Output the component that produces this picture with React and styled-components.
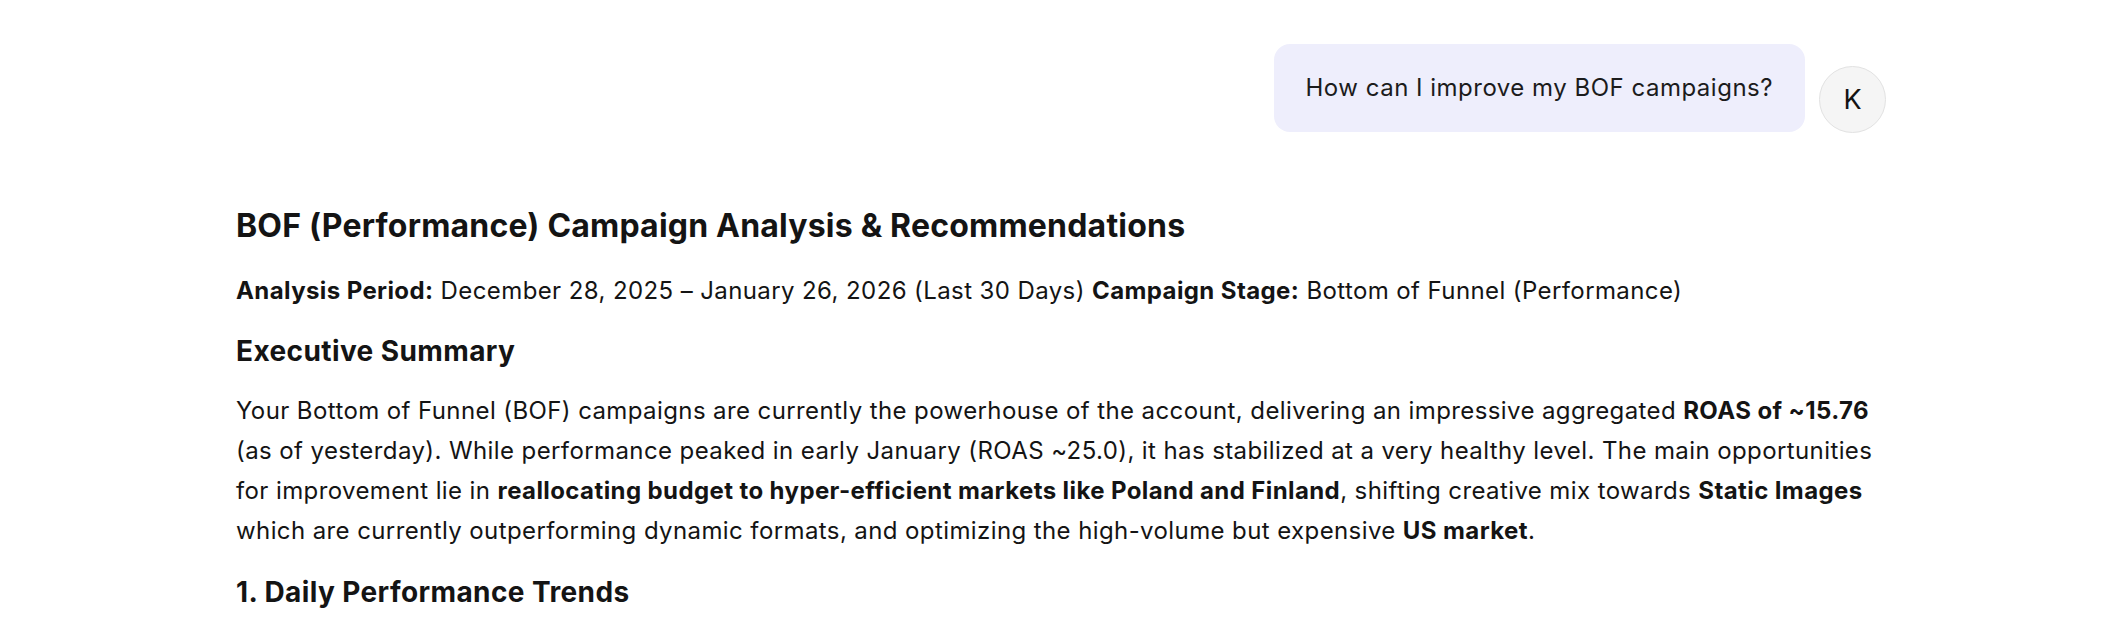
import React from "react";
import styled, { createGlobalStyle } from "styled-components";

const Global = createGlobalStyle`
  html, body { margin: 0; padding: 0; background: #ffffff; }
  body { font-family: Inter, "Liberation Sans", sans-serif; color: #141414; -webkit-font-smoothing: antialiased; }
`;

const Page = styled.main`
  box-sizing: border-box;
  width: 100%;
  padding: 44px 228px 0 236px;
  display: flex;
  flex-direction: column;
`;

const UserRow = styled.div`
  display: flex;
  justify-content: flex-end;
  align-items: flex-end;
  gap: 14px;
`;

const Bubble = styled.div`
  background: #eeeefc;
  border-radius: 16px;
  padding: 30px 32px;
  font-size: 24px;
  line-height: 28px;
  letter-spacing: 0.5px;
  color: #1c1c1c;
`;

const Avatar = styled.div`
  width: 67px;
  height: 67px;
  border-radius: 50%;
  background: #f5f5f5;
  border: 1px solid #e2e2e2;
  box-sizing: border-box;
  display: flex;
  align-items: center;
  justify-content: center;
  font-size: 27px;
  color: #141414;
  margin-bottom: -1px;
`;

const Answer = styled.article`
  margin-top: 76px;
  display: flex;
  flex-direction: column;
`;

const Title = styled.h1`
  margin: 0;
  font-size: 32px;
  line-height: 36px;
  font-weight: 700;
  letter-spacing: 0.2px;
`;

const Heading = styled.h2`
  margin: ${(p) => p.$top}px 0 0;
  font-size: 28px;
  line-height: 32px;
  font-weight: 700;
  letter-spacing: 0.4px;
`;

const Para = styled.p`
  margin: ${(p) => p.$top}px 0 0;
  font-size: 24px;
  line-height: 40px;
  letter-spacing: 0.4px;
`;

const B = styled.strong`
  font-weight: 700;
`;

export default function App() {
  return (
    <>
      <Global />
      <Page>
        <UserRow>
          <Bubble>How can I improve my BOF campaigns?</Bubble>
          <Avatar>K</Avatar>
        </UserRow>
        <Answer>
          <Title>BOF (Performance) Campaign Analysis &amp; Recommendations</Title>
          <Para $top={27}>
            <B>Analysis Period:</B> December 28, 2025 – January 26, 2026 (Last 30 Days){" "}
            <B>Campaign Stage:</B> Bottom of Funnel (Performance)
          </Para>
          <Heading $top={24}>Executive Summary</Heading>
          <Para $top={24}>
            Your Bottom of Funnel (BOF) campaigns are currently the powerhouse of the account, delivering an
            impressive aggregated <B>ROAS of ~15.76</B> (as of yesterday). While performance peaked in early
            January (ROAS ~25.0), it has stabilized at a very healthy level. The main opportunities for
            improvement lie in <B>reallocating budget to hyper-efficient markets like Poland and Finland</B>,
            shifting creative mix towards <B>Static Images</B> which are currently outperforming dynamic
            formats, and optimizing the high-volume but expensive <B>US market</B>.
          </Para>
          <Heading $top={25}>1. Daily Performance Trends</Heading>
        </Answer>
      </Page>
    </>
  );
}
